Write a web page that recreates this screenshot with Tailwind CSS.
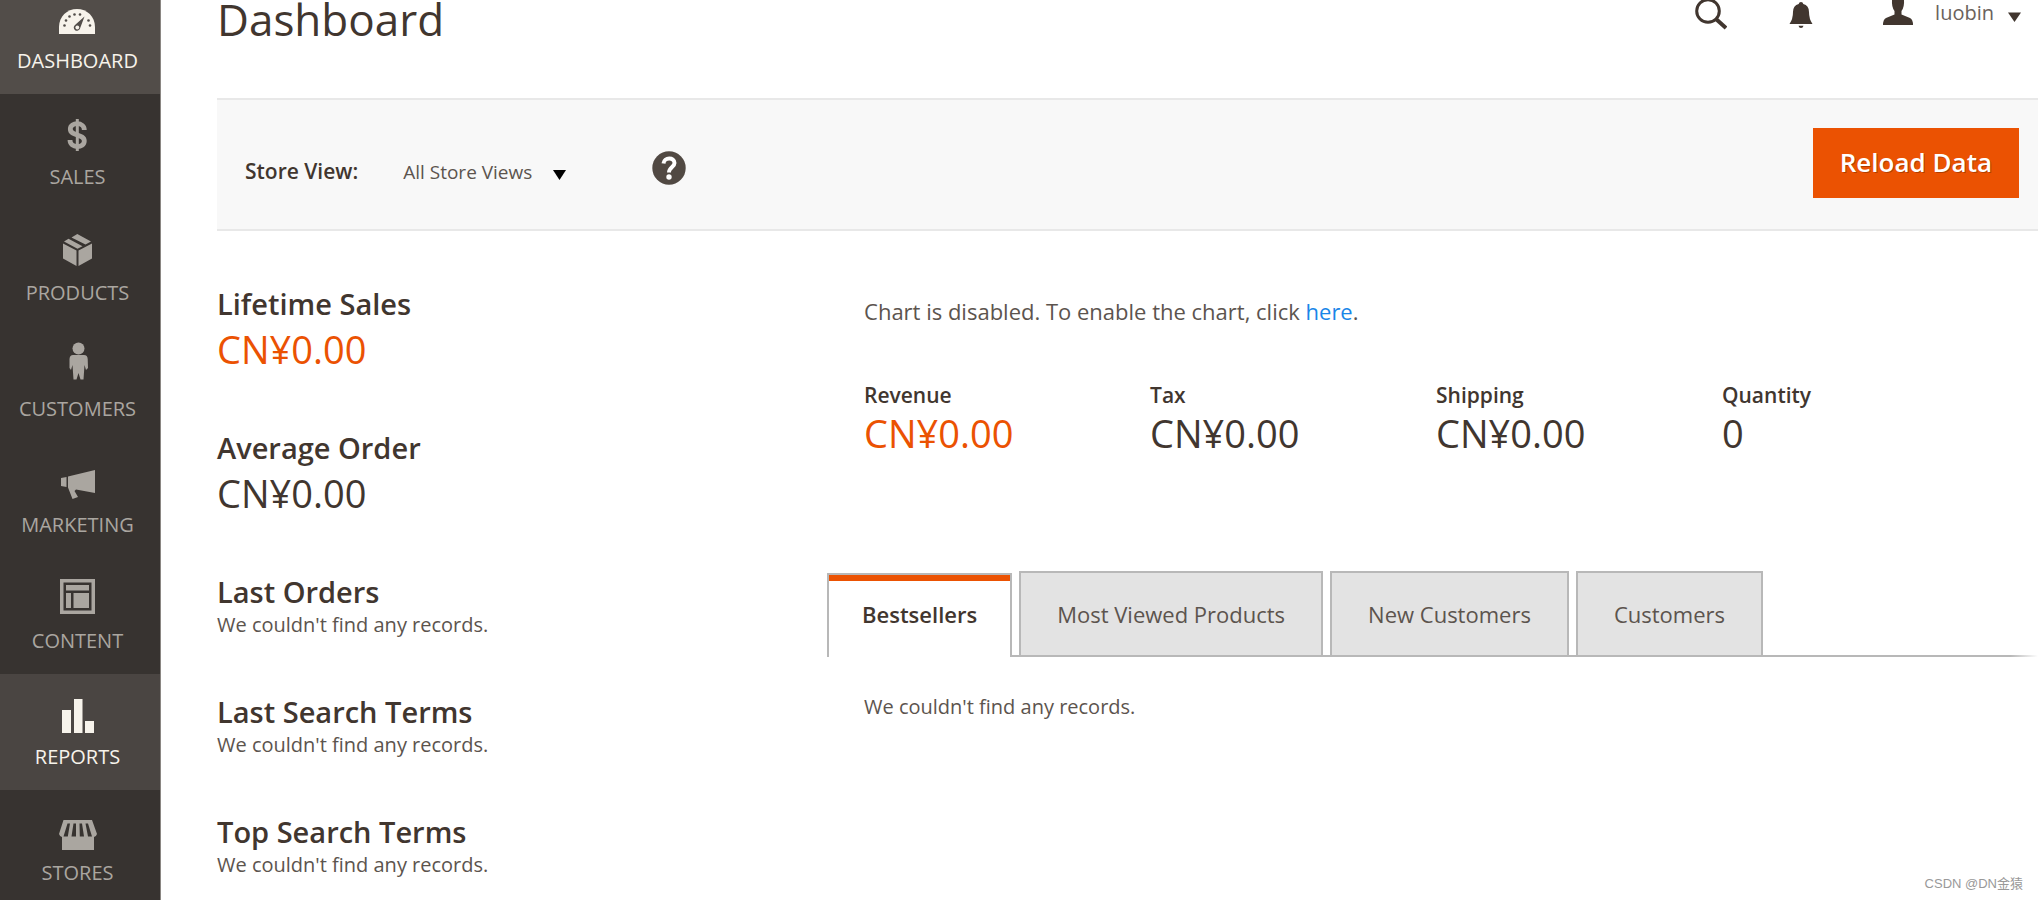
<!DOCTYPE html>
<html lang="en">
<head>
  <meta charset="UTF-8">
  <meta name="viewport" content="width=device-width, initial-scale=1.0">
  <title>Dashboard</title>
  <script src="https://cdn.jsdelivr.net/npm/@tailwindcss/browser@4"></script>
</head>
<body class="relative flex h-screen overflow-hidden bg-white font-['Open_Sans','Noto_Sans_CJK_SC',sans-serif] text-[20px] text-[#41362f]">

  <!-- Side menu -->
  <nav class="w-[161px] shrink-0 border-r border-[#8a8682] bg-[#373330] text-[20px] leading-6 text-[#aaa6a0]">
    <a href="#" class="flex h-[94px] flex-col items-center justify-end gap-2 bg-[#524d49] pr-[5px] pb-[21px] text-[#f7f3eb]">
      <svg class="size-11 shrink-0" viewBox="1 0 44 44" fill="currentColor">
        <path d="M4 37V30C4 19.500 12 12 22 12S40 19.500 40 30V37Z"/>
        <g fill="#524d49">
          <circle cx="9.500" cy="28.500" r="1.300"/><circle cx="11" cy="23.500" r="1.300"/><circle cx="14.500" cy="19.500" r="1.300"/><circle cx="19.500" cy="17.500" r="1.300"/><circle cx="25" cy="17.500" r="1.300"/><circle cx="33.500" cy="23.500" r="1.300"/><circle cx="35" cy="28.500" r="1.300"/>
          <path d="M29.500 19.500L25 31.500A3.200 3.200 0 1 1 20 28Z"/>
        </g>
        <circle cx="22.300" cy="30.500" r="1.900"/>
      </svg>
      <span>DASHBOARD</span>
    </a>
    <a href="#" class="flex h-[116px] flex-col items-center justify-end gap-2 pr-[5px] pb-[21px]">
      <svg class="size-11 shrink-0" viewBox="1 0 44 44" fill="none" stroke="currentColor">
        <path stroke-width="4.800" d="M29.300 17C29.300 8.800 15.300 8.800 15.300 16C15.300 23.500 29.300 20.500 29.300 28C29.300 35.500 15 35.500 15 27"/>
        <path stroke-width="3" d="M22.300 6V38"/>
      </svg>
      <span>SALES</span>
    </a>
    <a href="#" class="flex h-[116px] flex-col items-center justify-end gap-2 pr-[5px] pb-[21px]">
      <svg class="size-11 shrink-0" viewBox="1 0 44 44" fill="currentColor">
        <path d="M8 14.500L21.500 21.500V37L8 29.500ZM37 14.500L23.500 21.500V37L37 29.500ZM9 12.500L13.500 9.800L27.500 17.200L22.500 19.800ZM16.500 8.500L22.300 5L36 12.500L30.500 15.500Z"/>
      </svg>
      <span>PRODUCTS</span>
    </a>
    <a href="#" class="flex h-[116px] flex-col items-center justify-end gap-2 pr-[5px] pb-[21px]">
      <svg class="size-11 shrink-0 overflow-visible" viewBox="1 0 44 44" fill="currentColor">
        <circle cx="23.500" cy="3.500" r="6"/>
        <path d="M18 10H29Q32.500 10 32.700 14L33 23L31 25L29.500 20L28.500 34.500H25.500L23.500 28L21.500 34.500H18.500L17.500 20L16 25L14.500 23V14Q14.800 10 18 10Z"/>
      </svg>
      <span>CUSTOMERS</span>
    </a>
    <a href="#" class="flex h-[116px] flex-col items-center justify-end gap-2 pr-[5px] pb-[21px]">
      <svg class="size-11 shrink-0" viewBox="1 0 44 44" fill="currentColor">
        <path d="M6 17L11.500 16V26L6 25ZM13 15.500L40 9V32L21 28.500L19.500 30L23 36L17.500 38L13 26.500Z"/>
      </svg>
      <span>MARKETING</span>
    </a>
    <a href="#" class="flex h-[116px] flex-col items-center justify-end gap-2 pr-[5px] pb-[21px]">
      <svg class="size-11 shrink-0" viewBox="1 0 44 44" fill="currentColor">
        <path fill-rule="evenodd" d="M5 2H40V37H5ZM8.500 5.500V33.500H36.500V5.500Z"/>
        <path d="M11 8H34V13.500H11ZM11 16H16V31H11ZM18.500 16H34V31H18.500Z"/>
      </svg>
      <span>CONTENT</span>
    </a>
    <a href="#" class="flex h-[116px] flex-col items-center justify-end gap-2 bg-[#4a4542] pr-[5px] pb-[21px] text-[#f7f3eb]">
      <svg class="size-11 shrink-0" viewBox="1 0 44 44" fill="currentColor">
        <path d="M7 17H16V40H7ZM19 6H27.500V40H19ZM30 28H39V40H30Z"/>
      </svg>
      <span>REPORTS</span>
    </a>
    <a href="#" class="flex h-[116px] flex-col items-center justify-end gap-2 pr-[5px] pb-[21px]">
      <svg class="size-11 shrink-0" viewBox="1 0 44 44" fill="currentColor">
        <path d="M8.500 11H37L42 25Q41 28 39 28V41H7V28Q5 28 4 25Z"/>
        <path fill="#373330" d="M12.500 14.500H15L12.800 27.500H8.500ZM18.500 14.500H21V27.500H16.500ZM24.500 14.500H27L29 27.500H24.800ZM30.500 14.500H33L37 27.500H33Z"/>
      </svg>
      <span>STORES</span>
    </a>
  </nav>

  <div class="min-w-0 flex-1 pl-14">

    <header class="flex h-[98px] items-start justify-between pr-[17px]">
      <h1 class="text-[44px] leading-[38px]">Dashboard</h1>
      <div class="flex items-start">
        <button aria-label="Search" class="mr-[62px]">
          <svg class="h-[30px] w-8" viewBox="0 0 32 30" fill="none" stroke="#41362f">
            <circle cx="13" cy="11" r="11.300" stroke-width="3"/>
            <path stroke-width="4" d="M21 19L31 28"/>
          </svg>
        </button>
        <button aria-label="Notifications" class="mr-[70px]">
          <svg class="h-[30px] w-6" viewBox="0 0 24 30" fill="#41362f">
            <path d="M12 2Q14 2 14.300 4Q20 5.500 20 12Q20 19 23.500 24H.5Q4 19 4 12Q4 5.500 9.700 4Q10 2 12 2ZM9.500 25.800H14.500Q14 28 12 28T9.500 25.800Z"/>
          </svg>
        </button>
        <button class="flex items-start text-[20px] leading-[26px] text-[#6b625c]">
          <svg class="mr-[22px] h-[26px] w-[30px]" viewBox="0 0 30 26" fill="#41362f">
            <path d="M9 0H21Q21.500 7 18.500 11V14.500L27 18Q30 19.500 30 25H0Q0 19.500 3 18L11.500 14.500V11Q8.500 7 9 0Z"/>
          </svg>
          luobin
          <svg class="ml-[14px] h-[26px] w-[13px]" viewBox="0 0 13 26" fill="#41362f"><path d="M0 12.500H13L6.500 22Z"/></svg>
        </button>
      </div>
    </header>

    <!-- Store switcher -->
    <div class="flex items-center justify-between border-y-2 border-[#e8e8e8] bg-[#f8f8f8] pt-7 pr-[19px] pb-[31px] pl-7">
      <div class="mt-[18px] flex items-center">
        <label for="store" class="mr-[45px] text-[21px] font-semibold">Store View:</label>
        <div class="relative">
          <select id="store" class="h-[30px] w-[163px] appearance-none text-[19px] text-[#5c544e]">
            <option>All Store Views</option>
          </select>
          <svg class="pointer-events-none absolute top-[13px] right-0 h-[10px] w-[13px]" viewBox="0 0 13 10" fill="#000"><path d="M0 0H13L6.500 10Z"/></svg>
        </div>
        <button aria-label="Help" class="mb-2 ml-[86px]">
          <svg class="size-[34px]" viewBox="0 0 34 34" fill="none">
            <circle cx="17" cy="17" r="16.700" fill="#514943"/>
            <path stroke="#fff" stroke-width="4" d="M11.500 12.500C12 6 22.500 6 22.500 12C22.500 16 17 16 17 21.500"/>
            <circle cx="17" cy="26" r="2.700" fill="#fff"/>
          </svg>
        </button>
      </div>
      <button class="h-[70px] bg-[#eb5202] px-[27px] pb-0.5 text-[26px] font-semibold text-white text-shadow-[1px_1px_0_rgb(0_0_0/0.25)]">Reload Data</button>
    </div>

    <div class="grid grid-cols-[67fr_133fr]">

      <div class="flex flex-col gap-[54px] pt-[55px]">
        <section>
          <h2 class="text-[29px] leading-9 font-semibold">Lifetime Sales</h2>
          <p class="text-[38px] leading-[54px] text-[#eb5202]">CN¥0.00</p>
        </section>
        <section>
          <h2 class="text-[29px] leading-9 font-semibold">Average Order</h2>
          <p class="text-[38px] leading-[54px]">CN¥0.00</p>
        </section>
        <section>
          <h2 class="text-[29px] leading-9 font-semibold">Last Orders</h2>
          <p class="text-[20px] leading-[30px] text-[#5c544e]">We couldn't find any records.</p>
        </section>
        <section>
          <h2 class="text-[29px] leading-9 font-semibold">Last Search Terms</h2>
          <p class="text-[20px] leading-[30px] text-[#5c544e]">We couldn't find any records.</p>
        </section>
        <section>
          <h2 class="text-[29px] leading-9 font-semibold">Top Search Terms</h2>
          <p class="text-[20px] leading-[30px] text-[#5c544e]">We couldn't find any records.</p>
        </section>
      </div>

      <div class="pt-[65px]">
        <p class="pl-[37px] text-[22px] leading-[30px] text-[#5c544e]">Chart is disabled. To enable the chart, click <a href="#" class="text-[#1a86e8]">here</a>.</p>

        <dl class="mt-[55px] grid grid-cols-4 pr-[30px] pl-[37px]">
          <div>
            <dt class="text-[21px] leading-7 font-semibold">Revenue</dt>
            <dd class="text-[38px] leading-[48px] text-[#eb5202]">CN¥0.00</dd>
          </div>
          <div>
            <dt class="text-[21px] leading-7 font-semibold">Tax</dt>
            <dd class="text-[38px] leading-[48px]">CN¥0.00</dd>
          </div>
          <div>
            <dt class="text-[21px] leading-7 font-semibold">Shipping</dt>
            <dd class="text-[38px] leading-[48px]">CN¥0.00</dd>
          </div>
          <div>
            <dt class="text-[21px] leading-7 font-semibold">Quantity</dt>
            <dd class="text-[38px] leading-[48px]">0</dd>
          </div>
        </dl>

        <div role="tablist" class="mt-[114px] flex items-end text-[22px] leading-[30px] text-[#5c544e]">
          <button role="tab" aria-selected="true" class="h-[84px] border-x-2 border-t-2 border-[#b8b8b8] bg-white font-semibold text-[#41362f]">
            <span class="block h-[82px] border-t-[6px] border-[#eb5202] px-[33px] pt-[18px]">Bestsellers</span>
          </button>
          <span class="h-0.5 w-[7px] bg-[#b8b8b8]"></span>
          <button role="tab" class="h-[86px] border-2 border-[#b8b8b8] bg-[#e3e3e3] px-9">Most Viewed Products</button>
          <span class="h-0.5 w-[7px] bg-[#b8b8b8]"></span>
          <button role="tab" class="h-[86px] border-2 border-[#b8b8b8] bg-[#e3e3e3] px-9">New Customers</button>
          <span class="h-0.5 w-[7px] bg-[#b8b8b8]"></span>
          <button role="tab" class="h-[86px] border-2 border-[#b8b8b8] bg-[#e3e3e3] px-9">Customers</button>
          <span class="h-0.5 flex-1 bg-linear-to-r from-[#b8b8b8] from-90% to-white"></span>
        </div>
        <p role="tabpanel" class="mt-[35px] pl-[37px] text-[20px] leading-[30px] text-[#5c544e]">We couldn't find any records.</p>
      </div>

    </div>
  </div>

  <span class="absolute right-[15px] bottom-1.5 font-['Liberation_Sans','Noto_Sans_CJK_SC',sans-serif] text-[13px] leading-5 text-[#999]">CSDN @DN金猿</span>
</body>
</html>
